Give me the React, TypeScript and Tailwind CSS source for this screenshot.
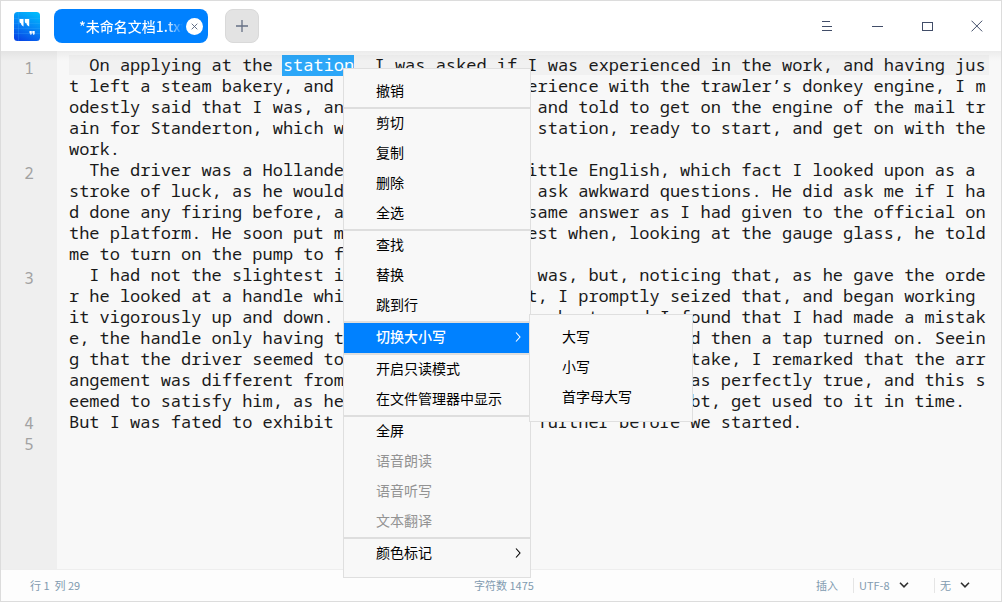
import React from "react";

const rows: { text: string; selected?: [number, number] }[] = [
  { text: "  On applying at the station, I was asked if I was experienced in the work, and having jus", selected: [21, 28] },
  { text: "t left a steam bakery, and also having an experience with the trawler’s donkey engine, I m" },
  { text: "odestly said that I was, and was then engaged and told to get on the engine of the mail tr" },
  { text: "ain for Standerton, which was standing in the station, ready to start, and get on with the" },
  { text: "work." },
  { text: "  The driver was a Hollander and spoke very little English, which fact I looked upon as a" },
  { text: "stroke of luck, as he would then be unable to ask awkward questions. He did ask me if I ha" },
  { text: "d done any firing before, and I gave him the same answer as I had given to the official on" },
  { text: "the platform. He soon put me smartly to the test when, looking at the gauge glass, he told" },
  { text: "me to turn on the pump to fill the boiler." },
  { text: "  I had not the slightest idea where the pump was, but, noticing that, as he gave the orde" },
  { text: "r he looked at a handle which was by his right, I promptly seized that, and began working" },
  { text: "it vigorously up and down. We rode on for once about, and I found that I had made a mistak" },
  { text: "e, the handle only having to be moved a little way to be found then a tap turned on. Seein" },
  { text: "g that the driver seemed to be rather puzzled by so big a mistake, I remarked that the arr" },
  { text: "angement was different from any that I had seen, which fact was perfectly true, and this s" },
  { text: "eemed to satisfy him, as he said that I should, without a doubt, get used to it in time." },
  { text: "But I was fated to exhibit my ignorance still further before we started." },
];

function Row({ text, selected }: { text: string; selected?: [number, number] }) {
  if (!selected) return <div className="h-[21px] whitespace-pre">{text}</div>;
  const [a, b] = selected;
  return (
    <div className="h-[21px] w-[920px] whitespace-pre bg-[linear-gradient(#f1f1f1,#f1f1f1)] bg-[position:0_1px] bg-no-repeat">
      {text.slice(0, a)}
      <span className="-ml-px inline-block h-[22px] bg-[linear-gradient(#2ca7f8,#2ca7f8)] bg-[position:0_1px] bg-no-repeat pl-px align-top text-white">
        {text.slice(a, b)}
      </span>
      {text.slice(b)}
    </div>
  );
}

type Item = { label: string; disabled?: boolean; active?: boolean; sub?: boolean };

const groups: Item[][] = [
  [{ label: "撤销" }],
  [{ label: "剪切" }, { label: "复制" }, { label: "删除" }, { label: "全选" }],
  [{ label: "查找" }, { label: "替换" }, { label: "跳到行" }],
  [{ label: "切换大小写", active: true, sub: true }],
  [{ label: "开启只读模式" }, { label: "在文件管理器中显示" }],
  [
    { label: "全屏" },
    { label: "语音朗读", disabled: true },
    { label: "语音听写", disabled: true },
    { label: "文本翻译", disabled: true },
  ],
  [{ label: "颜色标记", sub: true }],
];

function MenuItem({ label, disabled, active, sub }: Item) {
  const tone = active ? "bg-[#0081ff] font-medium text-white" : disabled ? "text-[#939393]" : "text-black";
  return (
    <div className={`flex h-[30px] items-center justify-between pl-8 pr-[9px] ${tone}`}>
      <span className="pb-1">{label}</span>
      {sub && (
        <svg width="6" height="10" viewBox="0 0 6 10" fill="none" stroke="currentColor" strokeWidth="1.1" className="mb-0.5">
          <path d="M1 .5 5 5 1 9.5" />
        </svg>
      )}
    </div>
  );
}

function Chevron() {
  return (
    <svg width="10" height="6" viewBox="0 0 10 6" fill="none" stroke="#303030" strokeWidth="1.6" className="-ml-px mb-0.5">
      <path d="M1 .8 5 4.8 9 .8" />
    </svg>
  );
}

function Logo() {
  return (
    <svg width="26" height="29" viewBox="0 0 26 29">
      <defs>
        <linearGradient id="logo" x1=".7" y1="0" x2=".3" y2="1">
          <stop offset="0" stopColor="#00b8fb" />
          <stop offset=".5" stopColor="#0583f5" />
          <stop offset="1" stopColor="#0747e6" />
        </linearGradient>
      </defs>
      <rect width="26" height="29" rx="3.5" fill="url(#logo)" />
      <path d="M0 6.5h26M0 11.5h26M0 16.5h26M0 21.5h26M4.5 0v29" stroke="#4dbbff" strokeOpacity=".3" strokeWidth=".7" />
      <path
        d="M5.5 7h4v7.5c-1.8-.6-2.4-2-2.5-3.2-1-.2-1.5-.8-1.5-1.8zM10.8 7h4.4v7.5c-2-.6-2.6-2-2.7-3.2-1.2-.2-1.7-.8-1.7-1.8z"
        fill="#fff"
      />
      <path d="M15.5 19h2.3v2.2c0 1-.6 1.6-1.4 1.8v-1.4c-.6 0-.9-.4-.9-.9zM18.3 19h2.4v2.2c0 1-.6 1.6-1.5 1.8v-1.4c-.6 0-.9-.4-.9-.9z" fill="#fff" />
    </svg>
  );
}

export default function App() {
  return (
    <div className="relative flex h-[602px] w-[1002px] flex-col overflow-hidden border border-[#dcdcdc] bg-white font-['Noto_Sans_CJK_SC',sans-serif]">
      <header className="flex h-[50px] shrink-0 items-center pl-[13px]">
        <Logo />
        <div className="ml-3.5 flex h-[34px] w-[154px] items-center justify-end rounded-lg bg-[#0081ff] pr-[5px]">
          <span className="w-[104px] overflow-hidden whitespace-nowrap bg-[linear-gradient(90deg,#fff_84%,transparent)] bg-clip-text text-[14px] font-medium leading-[22px] text-transparent">
            *未命名文档1.txt
          </span>
          <span className="ml-[3px] flex size-[17px] items-center justify-center rounded-full bg-white">
            <svg width="7" height="7" viewBox="0 0 7 7" stroke="#52617c" strokeWidth=".9">
              <path d="M.7.7 6.3 6.3M6.3.7.7 6.3" />
            </svg>
          </span>
        </div>
        <div className="ml-[17px] flex size-[34px] items-center justify-center rounded-lg border border-[#d9d9d9] bg-[#e3e3e3]">
          <svg width="12" height="12" viewBox="0 0 12 12" stroke="#667085" strokeWidth="1.3">
            <path d="M6 0v12M0 6h12" />
          </svg>
        </div>
        <div className="ml-auto flex items-center gap-[39px] pr-[18px] text-[#414d68]">
          <svg width="11" height="12" viewBox="0 0 11 12" stroke="currentColor" shapeRendering="crispEdges">
            <path d="M0 1.5h8M0 6.5h10M0 10.5h10" />
          </svg>
          <svg width="11" height="12" viewBox="0 0 11 12" stroke="currentColor" shapeRendering="crispEdges">
            <path d="M0 6.5h11" />
          </svg>
          <svg width="11" height="12" viewBox="0 0 11 12" fill="none" stroke="currentColor" shapeRendering="crispEdges">
            <path d="M.5 2.5h10v8H.5z" />
          </svg>
          <svg width="12" height="12" viewBox="0 0 12 12" stroke="currentColor" strokeWidth="1" className="-ml-px">
            <path d="M.5.7 11.2 11.4M11.2.7.5 11.4" />
          </svg>
        </div>
      </header>

      <main className="relative flex h-[518px] shrink-0 bg-[#f8f8f8] font-['Noto_Sans_Mono','Noto_Sans',monospace] text-[17px] leading-[21px]">
        <div className="flex w-14 shrink-0 flex-col bg-[#efefef] pt-[7px] text-center text-[16px] text-[#a2a2a2]">
          <div className="h-[105px]">1</div>
          <div className="h-[105px]">2</div>
          <div className="h-[145px]">3</div>
          <div className="h-[21px]">4</div>
          <div className="h-[21px]">5</div>
        </div>
        <div className="pl-3 pt-[3px] tracking-[-0.015px] text-[#1a1a1a]">
          {rows.map((r) => (
            <Row key={r.text} {...r} />
          ))}
        </div>
        <div className="pointer-events-none absolute inset-x-0 top-0 h-2.5 bg-linear-to-b from-black/5 to-transparent" />
      </main>

      <footer className="flex h-8 shrink-0 items-center border-t border-[#eeeeee] bg-[#fdfdfd] pr-[30px] text-[11px] leading-[16px] text-[#829bb0]">
        <span className="w-[444px] pb-0.5 pl-[29px]">行 1&nbsp; 列 29</span>
        <span className="w-[371px] pb-0.5 pl-[29px]">字符数 1475</span>
        <span className="w-[37px] pb-0.5">插入</span>
        <span className="flex h-[15px] w-[81px] items-center border-l border-[#e5e5e5] pl-[5px]">
          <span className="w-[41px] pb-0.5">UTF-8</span>
          <Chevron />
        </span>
        <span className="flex h-[15px] items-center border-l border-[#e5e5e5] pl-[5px]">
          <span className="w-[21px] pb-0.5">无</span>
          <Chevron />
        </span>
      </footer>

      <div className="absolute left-[342px] top-[67px] w-[188px] border border-[#dfdfdf] bg-[#f8f8f8] py-2 text-[14px] leading-[20px]">
        {groups.map((g, i) => (
          <div key={i} className={i ? "border-t-2 border-[#dedede]" : ""}>
            {g.map((it) => (
              <MenuItem key={it.label} {...it} />
            ))}
          </div>
        ))}
      </div>
      <div className="absolute left-[528px] top-[313px] w-[164px] border border-[#dfdfdf] bg-[#f8f8f8] py-2 text-[14px] leading-[20px]">
        <MenuItem label="大写" />
        <MenuItem label="小写" />
        <MenuItem label="首字母大写" />
      </div>
    </div>
  );
}
